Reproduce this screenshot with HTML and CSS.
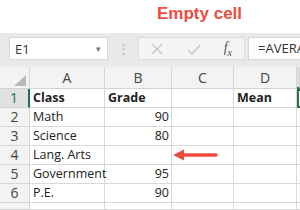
FILE: index.html
```html
<!DOCTYPE html>
<html>
<head>
  <meta charset="UTF-8">
  <title>Empty cell</title>
  <link rel="stylesheet" href="styles.css">
</head>
<body>
  <div class="title">Empty cell</div>

  <div class="toolbar">
    <div class="namebox">
      <span>E1</span>
      <span class="caret">▾</span>
    </div>
    <div class="grip">⋮</div>
    <div class="fx-group">
      <svg width="14" height="14" viewBox="0 0 14 14"><path d="M2 2 L12 12 M12 2 L2 12" stroke="#c4c4c4" stroke-width="1.3" fill="none"/></svg>
      <svg width="16" height="14" viewBox="0 0 16 14"><path d="M2 8 L6 12 L14 3" stroke="#c4c4c4" stroke-width="1.3" fill="none"/></svg>
      <span class="fx">f<sub>x</sub></span>
    </div>
    <div class="formula">=AVERAGE(B2:B6)</div>
  </div>

  <div class="sheet">
    <div class="hd corner"><span class="tri"></span></div>
    <div class="hd col">A</div>
    <div class="hd col">B</div>
    <div class="hd col">C</div>
    <div class="hd col">D</div>
    <div class="hd col sel-col"></div>

    <div class="hd row sel-row">1</div>
    <div class="cell bold">Class</div>
    <div class="cell bold">Grade</div>
    <div class="cell"></div>
    <div class="cell bold">Mean</div>
    <div class="cell active"></div>

    <div class="hd row">2</div>
    <div class="cell">Math</div>
    <div class="cell num">90</div>
    <div class="cell"></div>
    <div class="cell"></div>
    <div class="cell"></div>

    <div class="hd row">3</div>
    <div class="cell">Science</div>
    <div class="cell num">80</div>
    <div class="cell"></div>
    <div class="cell"></div>
    <div class="cell"></div>

    <div class="hd row">4</div>
    <div class="cell">Lang. Arts</div>
    <div class="cell num"></div>
    <div class="cell arrow-cell">
      <svg class="arrow" width="46" height="14" viewBox="0 0 46 14">
        <path d="M44 7 L10 7" stroke="#ec4c3f" stroke-width="3.5" stroke-linecap="round"/>
        <path d="M1 7 L12 1.5 L12 12.5 Z" fill="#ec4c3f"/>
      </svg>
    </div>
    <div class="cell"></div>
    <div class="cell"></div>

    <div class="hd row">5</div>
    <div class="cell">Government</div>
    <div class="cell num">95</div>
    <div class="cell"></div>
    <div class="cell"></div>
    <div class="cell"></div>

    <div class="hd row">6</div>
    <div class="cell">P.E.</div>
    <div class="cell num">90</div>
    <div class="cell"></div>
    <div class="cell"></div>
    <div class="cell"></div>

    <div class="hd row"></div>
    <div class="cell"></div>
    <div class="cell"></div>
    <div class="cell"></div>
    <div class="cell"></div>
    <div class="cell"></div>
  </div>
</body>
</html>
```

FILE: styles.css
```css
* {
  margin: 0;
  padding: 0;
  box-sizing: border-box;
}

body {
  width: 300px;
  height: 210px;
  overflow: hidden;
  background: #fff;
  font-family: "Open Sans", "Liberation Sans", sans-serif;
  color: #222;
}

.title {
  height: 33px;
  padding-left: 157px;
  padding-top: 4px;
  font-family: "Liberation Sans", Arial, sans-serif;
  font-size: 17px;
  font-weight: bold;
  color: #ec4c3f;
  white-space: nowrap;
}

.toolbar {
  height: 34px;
  background: #e9e9e9;
  display: flex;
  align-items: flex-start;
  padding-top: 4px;
  padding-left: 9px;
  white-space: nowrap;
  overflow: hidden;
}

.namebox {
  flex-shrink: 0;
  width: 99px;
  height: 23px;
  background: #fff;
  border: 1px solid #d6d6d6;
  display: flex;
  align-items: center;
  justify-content: space-between;
  padding: 0 6px 0 5px;
  font-size: 13px;
  color: #333;
}

.caret {
  font-size: 9px;
  color: #777;
}

.grip {
  flex-shrink: 0;
  width: 30px;
  text-align: center;
  color: #b5b5b5;
  font-size: 13px;
  line-height: 23px;
}

.fx-group {
  flex-shrink: 0;
  width: 107px;
  height: 23px;
  background: #f4f4f4;
  border: 1px solid #dcdcdc;
  display: flex;
  align-items: center;
  justify-content: space-between;
  padding: 0 12px 0 11px;
}

.fx {
  font-family: "Liberation Serif", serif;
  font-style: italic;
  font-size: 14px;
  color: #555;
}

.fx sub {
  font-size: 10px;
}

.formula {
  margin-left: 3px;
  flex: 1;
  min-width: 0;
  overflow: hidden;
  height: 23px;
  background: #fff;
  border: 1px solid #d6d6d6;
  border-right: none;
  padding-left: 9px;
  font-size: 13px;
  line-height: 21px;
  color: #333;
}

.sheet {
  display: grid;
  grid-template-columns: 30px 75px 67px 62px 63px 3px;
  grid-template-rows: 22px repeat(6, 19px) 7px;
  font-size: 12.5px;
  overflow: hidden;
}

.hd {
  background: #f3f3f3;
  color: #444;
  border-right: 1px solid #d4d4d4;
  border-bottom: 1px solid #d4d4d4;
}

.col {
  text-align: center;
  line-height: 22px;
  font-size: 14px;
}

.corner {
  position: relative;
}

.tri {
  position: absolute;
  right: 3px;
  bottom: 2px;
  width: 0;
  height: 0;
  border-left: 12px solid transparent;
  border-bottom: 11px solid #b8b8b8;
}

.sel-col {
  background: #dedede;
  border-bottom: 2px solid #217346;
}

.row {
  text-align: center;
  line-height: 18px;
  font-size: 14px;
}

.sel-row {
  background: #e1e1e1;
  color: #217346;
  border-right: 2px solid #217346;
}

.cell {
  border-right: 1px solid #d9d9d9;
  border-bottom: 1px solid #d9d9d9;
  padding: 0 2px 0 3px;
  line-height: 18px;
  white-space: nowrap;
}

.bold {
  font-weight: bold;
}

.num {
  text-align: right;
}

.active {
  border: 2px solid #217346;
  border-right: none;
}

.arrow-cell {
  position: relative;
}

.arrow {
  position: absolute;
  left: 0;
  top: 2px;
}
```
